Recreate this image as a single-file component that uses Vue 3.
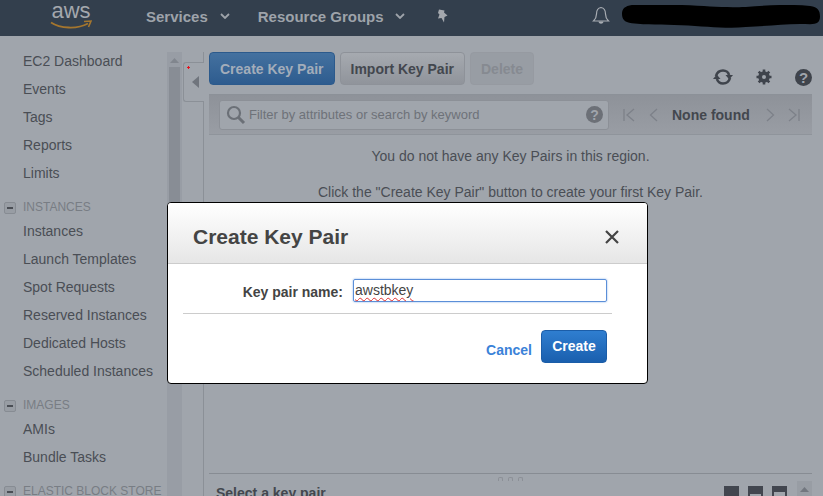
<script setup>
const groups = [
  { items: ['EC2 Dashboard', 'Events', 'Tags', 'Reports', 'Limits'] },
  { title: 'INSTANCES', items: ['Instances', 'Launch Templates', 'Spot Requests', 'Reserved Instances', 'Dedicated Hosts', 'Scheduled Instances'] },
  { title: 'IMAGES', items: ['AMIs', 'Bundle Tasks'] },
  { title: 'ELASTIC BLOCK STORE', items: [] },
]
</script>

<template>
  <div class="page">
    <header class="topbar">
      <div class="logo">
        <span class="logo-text">aws</span>
        <svg class="smile" width="42" height="10" viewBox="0 0 42 10">
          <path d="M1 2.5C10 8.5 27 9.5 38 3.5" fill="none" stroke="#a5762e" stroke-width="1.8" />
          <path d="M34 1.5L41 1L38.5 7" fill="none" stroke="#a5762e" stroke-width="1.6" />
        </svg>
      </div>
      <span class="nav first">Services</span>
      <svg class="caret" width="10" height="6" viewBox="0 0 10 6"><path d="M1 1l4 4 4-4" fill="none" stroke="#9ea3aa" stroke-width="1.8" /></svg>
      <span class="nav second">Resource Groups</span>
      <svg class="caret second-caret" width="10" height="6" viewBox="0 0 10 6"><path d="M1 1l4 4 4-4" fill="none" stroke="#9ea3aa" stroke-width="1.8" /></svg>
      <svg class="pin" width="14" height="14" viewBox="0 0 14 14">
        <path d="M3 0.5L8.5 1.5L8 3.5L11.5 6.5L8.5 8L8 13.5L5.5 9L2 9.5L3.5 5.5L2 4Z" fill="#a4a8ae" />
      </svg>
      <svg class="bell" width="18" height="20" viewBox="0 0 18 20">
        <path d="M9 1.5C5.5 2 4.5 5 4.5 8C4.5 11 3.5 13 1.5 15H16.5C14.5 13 13.5 11 13.5 8C13.5 5 12.5 2 9 1.5Z" fill="none" stroke="#a9adb3" stroke-width="1.2" />
        <path d="M6.5 15.5C6.8 18.5 11.2 18.5 11.5 15.5Z" fill="#a9adb3" />
      </svg>
      <svg class="scribble" width="198" height="23" viewBox="0 0 200 24" preserveAspectRatio="none">
        <path d="M10 0H60C90 1 100 3 125 2C150 0 170 -1 190 1C198 2 200 6 200 12C200 18 197 20 190 20C165 19 150 22 125 23C105 25 85 22 60 21C40 20 25 21 10 19C2 18 0 14 0 9C0 4 3 1 10 0Z" fill="#000" />
      </svg>
    </header>

    <div class="body">
      <aside class="sidebar">
        <div v-for="(group, g) in groups" :key="g" class="group">
          <div v-if="group.title" class="group-title">
            <span class="toggle"><i></i></span>{{ group.title }}
          </div>
          <div v-for="item in group.items" :key="item" class="item">{{ item }}</div>
        </div>
      </aside>

      <div class="scrollbar">
        <svg class="scroll-up" width="9" height="5" viewBox="0 0 9 5"><path d="M4.5 0L9 5H0Z" fill="#81868e" /></svg>
        <div class="thumb"></div>
      </div>

      <div class="divider">
        <div class="collapse">
          <span class="red-dot"></span>
          <svg width="7" height="12" viewBox="0 0 7 12"><path d="M7 0V12L0 6Z" fill="#70757d" /></svg>
        </div>
      </div>

      <main class="main">
        <div class="toolbar">
          <button class="btn primary">Create Key Pair</button>
          <button class="btn">Import Key Pair</button>
          <button class="btn off">Delete</button>
          <div class="tools">
            <svg width="20" height="16" viewBox="0 0 20 16">
              <path d="M3 7C4 3.500 7 1.500 10 1.500C13 1.500 15.500 3.500 16 6" fill="none" stroke="#3f444c" stroke-width="2.600" />
              <path d="M12.500 6H20L16.250 10.500Z" fill="#3f444c" />
              <path d="M17 9C16 12.500 13 14.500 10 14.500C7 14.500 4.500 12.500 4 10" fill="none" stroke="#3f444c" stroke-width="2.600" />
              <path d="M0 10H7.500L3.750 5.500Z" fill="#3f444c" />
            </svg>
            <svg width="16" height="16" viewBox="0 0 16 16">
              <circle cx="8" cy="8" r="4.200" fill="none" stroke="#3f444c" stroke-width="3.200" />
              <path d="M8 0.500V15.500M0.500 8H15.500M2.700 2.700L13.300 13.300M13.300 2.700L2.700 13.300" stroke="#3f444c" stroke-width="2.600" />
              <circle cx="8" cy="8" r="2" fill="#a0a5ac" />
            </svg>
            <span class="help big">?</span>
          </div>
        </div>

        <div class="filterbar">
          <div class="search">
            <svg width="20" height="20" viewBox="0 0 20 20">
              <circle cx="8" cy="8" r="6" fill="none" stroke="#6b7077" stroke-width="2.200" />
              <path d="M12.500 12.500L18 18" stroke="#6b7077" stroke-width="3" />
            </svg>
            <span class="placeholder">Filter by attributes or search by keyword</span>
            <span class="help">?</span>
          </div>
          <div class="pager">
            <svg width="12" height="14" viewBox="0 0 12 14"><path d="M1 1V13M11 1L4 7L11 13" fill="none" stroke="#7d8189" stroke-width="1.300" /></svg>
            <svg width="9" height="14" viewBox="0 0 9 14"><path d="M8 1L1.500 7L8 13" fill="none" stroke="#7d8189" stroke-width="1.300" /></svg>
            <b class="found">None found</b>
            <svg width="9" height="14" viewBox="0 0 9 14"><path d="M1 1L7.500 7L1 13" fill="none" stroke="#7d8189" stroke-width="1.300" /></svg>
            <svg width="12" height="14" viewBox="0 0 12 14"><path d="M11 1V13M1 1L8 7L1 13" fill="none" stroke="#7d8189" stroke-width="1.300" /></svg>
          </div>
        </div>

        <div class="empty">
          <p>You do not have any Key Pairs in this region.</p>
          <p>Click the "Create Key Pair" button to create your first Key Pair.</p>
        </div>

        <div class="details">
          <div class="grip"><i></i><i></i><i></i></div>
          <div class="details-row">
            <b class="select">Select a key pair</b>
            <div class="panes">
              <span class="pane"></span>
              <span class="pane half"></span>
              <span class="pane third"></span>
              <span class="pane-up"><svg width="9" height="5" viewBox="0 0 9 5"><path d="M4.500 0L9 5H0Z" fill="#72777f" /></svg></span>
            </div>
          </div>
        </div>
      </main>
    </div>

    <section class="modal">
      <div class="modal-head">
        <h2>Create Key Pair</h2>
        <svg width="14" height="14" viewBox="0 0 14 14"><path d="M1 1L13 13M13 1L1 13" stroke="#444" stroke-width="2.200" /></svg>
      </div>
      <div class="modal-body">
        <div class="field">
          <label>Key pair name:</label>
          <div class="input"><span class="typed">awstbkey</span></div>
        </div>
        <div class="rule"></div>
        <div class="actions">
          <span class="cancel">Cancel</span>
          <button class="create">Create</button>
        </div>
      </div>
    </section>
  </div>
</template>

<style>
html, body {
  margin: 0;
  overflow: hidden;
}
</style>

<style scoped>
.page {
  position: relative;
  width: 823px;
  height: 496px;
  overflow: hidden;
  background: #a0a5ac;
  font-family: "Liberation Sans", Arial, sans-serif;
  font-size: 14px;
  color: #4a4e55;
}

.topbar {
  display: flex;
  align-items: center;
  box-sizing: border-box;
  height: 36px;
  padding-bottom: 4px;
  background: #333f4d;
}
.logo {
  display: flex;
  flex-direction: column;
  align-items: center;
  width: 42px;
  margin-left: 50px;
}
.logo-text {
  margin: -2px 0;
  font-size: 22px;
  line-height: 21px;
  color: #a4a8ae;
}
.smile {
  display: block;
  margin-top: 1px;
}
.nav {
  font-size: 15px;
  font-weight: bold;
  color: #9ea3aa;
  white-space: nowrap;
}
.nav.first {
  margin-left: 54px;
}
.nav.second {
  margin-left: 28px;
}
.caret {
  margin-left: 12px;
}
.second-caret {
  margin-left: 11px;
}
.pin {
  margin-left: 31px;
}
.bell {
  margin-left: 142px;
}
.scribble {
  margin-left: 12px;
}

.body {
  display: flex;
  height: 460px;
}
.sidebar {
  width: 167px;
  flex: none;
  padding-top: 11px;
  overflow: hidden;
}
.group + .group {
  margin-top: 11px;
}
.group-title {
  display: flex;
  align-items: center;
  height: 18px;
  padding-bottom: 1px;
  font-size: 12px;
  color: #787d84;
  padding-left: 4px;
  white-space: nowrap;
}
.toggle {
  display: flex;
  align-items: center;
  justify-content: center;
  box-sizing: border-box;
  width: 12px;
  height: 12px;
  margin: 1px 7px 0 0;
  border: 1px solid #878c93;
  border-radius: 2px;
  background: #989da4;
}
.toggle i {
  display: block;
  width: 6px;
  height: 2px;
  background: #4a4e55;
}
.item {
  height: 28px;
  line-height: 28px;
  padding-left: 23px;
  white-space: nowrap;
}

.scrollbar {
  display: flex;
  flex-direction: column;
  align-items: center;
  width: 15px;
  flex: none;
  margin-top: 16px;
  background: #989da5;
}
.scroll-up {
  margin-top: 6px;
}
.thumb {
  width: 11px;
  height: 306px;
  margin-top: 4px;
  background: #888d95;
}

.divider {
  position: relative;
  flex: none;
  width: 22px;
  margin-top: 16px;
  border-right: 1px solid #8b9097;
  box-sizing: border-box;
}
.collapse {
  position: absolute;
  top: 10px;
  left: 1px;
  display: flex;
  align-items: center;
  justify-content: center;
  box-sizing: border-box;
  width: 21px;
  height: 40px;
  padding-left: 2px;
  background: #a0a5ac;
  border: 1px solid #8b9097;
  border-right: 0;
  border-radius: 3px 0 0 3px;
}
.red-dot {
  position: absolute;
  top: 3px;
  left: 3px;
  width: 3px;
  height: 3px;
  background:
    linear-gradient(#e8101a, #e8101a) center / 3px 1px no-repeat,
    linear-gradient(#e8101a, #e8101a) center / 1px 3px no-repeat;
}

.main {
  position: relative;
  flex: 1;
  min-width: 0;
  margin: 16px 11px 0 5px;
}
.toolbar {
  display: flex;
  align-items: flex-start;
  gap: 5px;
  height: 42px;
}
.btn {
  box-sizing: border-box;
  height: 33px;
  padding: 0 10px;
  border: 1px solid #8e9299;
  border-radius: 4px;
  background: linear-gradient(#a6aab0, #90949b);
  color: #43474e;
  font: bold 14px "Liberation Sans", Arial, sans-serif;
}
.btn.primary {
  border-color: #2c5a8c;
  background: linear-gradient(#44719f, #2e5c8f);
  color: #a3adba;
}
.btn.off {
  border-color: #969aa1;
  background: #989da4;
  color: #868a91;
}
.tools {
  display: flex;
  align-items: center;
  gap: 23px;
  margin: 16px 0 0 auto;
  height: 18px;
}
.help {
  display: flex;
  align-items: center;
  justify-content: center;
  width: 17px;
  height: 17px;
  border-radius: 50%;
  background: #6c7077;
  color: #a0a5ac;
  font-size: 14px;
  font-weight: bold;
}
.help.big {
  background: #3f444c;
  font-size: 15px;
}

.filterbar {
  display: flex;
  align-items: center;
  box-sizing: border-box;
  height: 41px;
  padding: 0 0 0 10px;
  border-top: 1px solid #8c9198;
  border-bottom: 1px solid #8f949b;
  background: linear-gradient(#8e9299, #999da4);
}
.search {
  display: flex;
  align-items: center;
  box-sizing: border-box;
  width: 390px;
  height: 30px;
  padding: 0 5px 0 6px;
  border: 1px solid #8c9097;
  border-radius: 3px;
  background: #a0a5ac;
}
.placeholder {
  flex: 1;
  margin-left: 3px;
  font-size: 13px;
  color: #6e7279;
}
.pager {
  display: flex;
  align-items: center;
  margin-left: 14px;
}
.pager svg + svg {
  margin-left: 14px;
}
.pager svg:last-child {
  margin-left: 13px;
}
.found {
  margin: 0 16px 0 14px;
  color: #43474e;
}

.empty {
  text-align: center;
  line-height: 16px;
}
.empty p {
  margin: 0;
  padding-top: 20px;
}
.empty p:first-child {
  padding-top: 13px;
}

.details {
  position: absolute;
  left: 0;
  right: 0;
  bottom: 0;
  height: 22px;
  border-top: 1px solid #878c93;
}
.grip {
  display: flex;
  justify-content: center;
  gap: 5px;
  height: 4px;
  margin-top: 3px;
}
.grip i {
  display: block;
  box-sizing: border-box;
  width: 5px;
  height: 4px;
  border: 1px solid #8c9097;
  border-bottom: 0;
  border-radius: 2px 2px 0 0;
}
.details-row {
  display: flex;
  justify-content: space-between;
  padding: 0 0 0 7px;
}
.select {
  margin-top: 4px;
  color: #43474e;
}
.panes {
  display: flex;
  gap: 9px;
  align-items: flex-start;
}
.pane {
  box-sizing: border-box;
  width: 15px;
  height: 15px;
  margin-top: 5px;
  background: #42464f;
}
.pane.half {
  border: solid #42464f;
  border-width: 8px 2px 0;
  background: #a0a5ac;
}
.pane.third {
  border: solid #42464f;
  border-width: 6px 2px 0;
  background: #a0a5ac;
}
.pane-up {
  display: flex;
  justify-content: center;
  box-sizing: border-box;
  width: 15px;
  height: 15px;
  margin-left: 1px;
  background: #989da4;
  padding-top: 6px;
}

.modal {
  position: absolute;
  top: 202px;
  left: 167px;
  box-sizing: border-box;
  width: 481px;
  height: 182px;
  overflow: hidden;
  border: 1px solid #000;
  border-radius: 4px;
  background: #fff;
  color: #444;
}
.modal-head {
  display: flex;
  align-items: center;
  justify-content: space-between;
  box-sizing: border-box;
  height: 61px;
  padding: 7px 28px 0 25px;
  border-bottom: 1px solid #ccc;
  background: linear-gradient(#fff, #e6e6e6);
}
.modal-head h2 {
  margin: 0;
  font-size: 21px;
}
.modal-body {
  padding: 15px 40px 0 15px;
}
.field {
  display: flex;
  align-items: center;
}
label {
  width: 160px;
  margin-right: 10px;
  padding-top: 2px;
  text-align: right;
  font-weight: bold;
}
.input {
  box-sizing: border-box;
  width: 254px;
  height: 23px;
  padding: 0 1px;
  line-height: 20px;
  border: 1px solid #5b8fd8;
  border-radius: 2px;
  box-shadow: 0 0 2px #7aa6e6;
  font-size: 14px;
}
.typed {
  text-decoration: underline wavy #e03030 1px;
  text-underline-offset: 2px;
}
.rule {
  width: 429px;
  height: 1px;
  margin-top: 11px;
  background: #ccc;
}
.actions {
  display: flex;
  align-items: center;
  justify-content: flex-end;
  gap: 9px;
  margin-top: 16px;
}
.cancel {
  margin-top: 6px;
  color: #3a82d8;
  font-weight: bold;
}
.create {
  box-sizing: border-box;
  width: 66px;
  height: 33px;
  padding: 0 0 1px;
  border: 1px solid #1b5da8;
  border-radius: 4px;
  background: linear-gradient(#2f7ed0, #1a5fae);
  color: #fff;
  font: bold 14px "Liberation Sans", Arial, sans-serif;
}
</style>
